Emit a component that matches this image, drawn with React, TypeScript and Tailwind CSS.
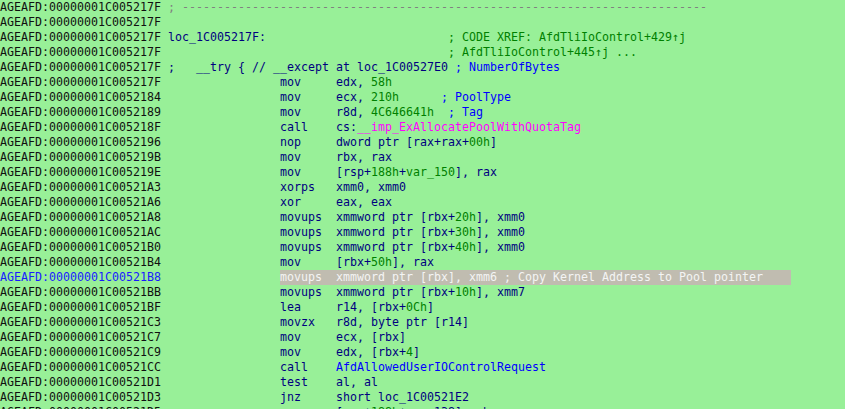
import React from 'react';

type Seg = [string, string];

const ADDR = 'text-[#101010]';
const NAVY = 'text-[#000080]';
const NUM = 'text-[#008000]';
const CMT = 'text-[#0000ff]';
const XREF = 'text-[#008000]';
const GREY = 'text-[#808080]';
const IMP = 'text-[#ff00ff]';

interface Line {
  addr: string;
  label?: Seg[];
  ins?: Seg[];
  hi?: boolean;
}

const pad = (n: number) => ' '.repeat(n);

const op = (mn: string, ...rest: Seg[]): Seg[] => [[mn.padEnd(8, ' '), NAVY], ...rest];

const lines: Line[] = [
  { addr: '00000001C005217F', label: [['; ' + '-'.repeat(75), GREY]] },
  { addr: '00000001C005217F' },
  {
    addr: '00000001C005217F',
    label: [
      ['loc_1C005217F:', NAVY],
      [pad(26), NAVY],
      ['; CODE XREF: AfdTliIoControl+429↑j', XREF],
    ],
  },
  { addr: '00000001C005217F', label: [[pad(40), NAVY], ['; AfdTliIoControl+445↑j ...', XREF]] },
  {
    addr: '00000001C005217F',
    label: [
      [';   __try { // __except at loc_1C00527E0 ', NAVY],
      ['; NumberOfBytes', CMT],
    ],
  },
  { addr: '00000001C005217F', ins: op('mov', ['edx, ', NAVY], ['58h', NUM]) },
  { addr: '00000001C0052184', ins: op('mov', ['ecx, ', NAVY], ['210h', NUM], [pad(6), NAVY], ['; PoolType', CMT]) },
  { addr: '00000001C0052189', ins: op('mov', ['r8d, ', NAVY], ['4C646641h', NUM], [pad(2), NAVY], ['; Tag', CMT]) },
  { addr: '00000001C005218F', ins: op('call', ['cs:', NAVY], ['__imp_ExAllocatePoolWithQuotaTag', IMP]) },
  { addr: '00000001C0052196', ins: op('nop', ['dword ptr [rax+rax+', NAVY], ['00h', NUM], [']', NAVY]) },
  { addr: '00000001C005219B', ins: op('mov', ['rbx, rax', NAVY]) },
  { addr: '00000001C005219E', ins: op('mov', ['[rsp+', NAVY], ['188h', NUM], ['+', NAVY], ['var_150', NUM], ['], rax', NAVY]) },
  { addr: '00000001C00521A3', ins: op('xorps', ['xmm0, xmm0', NAVY]) },
  { addr: '00000001C00521A6', ins: op('xor', ['eax, eax', NAVY]) },
  { addr: '00000001C00521A8', ins: op('movups', ['xmmword ptr [rbx+', NAVY], ['20h', NUM], ['], xmm0', NAVY]) },
  { addr: '00000001C00521AC', ins: op('movups', ['xmmword ptr [rbx+', NAVY], ['30h', NUM], ['], xmm0', NAVY]) },
  { addr: '00000001C00521B0', ins: op('movups', ['xmmword ptr [rbx+', NAVY], ['40h', NUM], ['], xmm0', NAVY]) },
  { addr: '00000001C00521B4', ins: op('mov', ['[rbx+', NAVY], ['50h', NUM], ['], rax', NAVY]) },
  {
    addr: '00000001C00521B8',
    hi: true,
    ins: [['movups  xmmword ptr [rbx], xmm6 ; Copy Kernel Address to Pool pointer', 'text-[#f4f4f4]']],
  },
  { addr: '00000001C00521BB', ins: op('movups', ['xmmword ptr [rbx+', NAVY], ['10h', NUM], ['], xmm7', NAVY]) },
  { addr: '00000001C00521BF', ins: op('lea', ['r14, [rbx+', NAVY], ['0Ch', NUM], [']', NAVY]) },
  { addr: '00000001C00521C3', ins: op('movzx', ['r8d, byte ptr [r14]', NAVY]) },
  { addr: '00000001C00521C7', ins: op('mov', ['ecx, [rbx]', NAVY]) },
  { addr: '00000001C00521C9', ins: op('mov', ['edx, [rbx+', NAVY], ['4', NUM], [']', NAVY]) },
  { addr: '00000001C00521CC', ins: op('call', ['AfdAllowedUserIOControlRequest', CMT]) },
  { addr: '00000001C00521D1', ins: op('test', ['al, al', NAVY]) },
  { addr: '00000001C00521D3', ins: op('jnz', ['short loc_1C00521E2', NAVY]) },
  { addr: '00000001C00521D5', ins: op('mov', ['[rsp+', NAVY], ['188h', NUM], ['+', NAVY], ['var_138], rbx', NAVY]) },
];

const Segs = ({ segs }: { segs: Seg[] }) => (
  <>
    {segs.map(([t, c], i) => (
      <span key={i} className={c}>
        {t}
      </span>
    ))}
  </>
);

export default function App() {
  return (
    <div className="w-[845px] h-[409px] overflow-hidden bg-[#98f098]">
      <div className="flex flex-col font-['DejaVu_Sans_Mono','Liberation_Mono',monospace] text-[11.63px] leading-[15px] whitespace-pre">
        {lines.map((l, i) => (
          <div key={i} className="flex h-[15px]">
            <span className={`w-[168px] shrink-0 ${l.hi ? 'text-[#1a1aff]' : ADDR}`}>AGEAFD:{l.addr}</span>
            {l.label && (
              <span>
                <Segs segs={l.label} />
              </span>
            )}
            {l.ins && (
              <>
                <span className="w-[112px] shrink-0" />
                <span className={l.hi ? 'w-[511px] bg-[#c0bcb0]' : ''}>
                  <Segs segs={l.ins} />
                </span>
              </>
            )}
          </div>
        ))}
      </div>
    </div>
  );
}
